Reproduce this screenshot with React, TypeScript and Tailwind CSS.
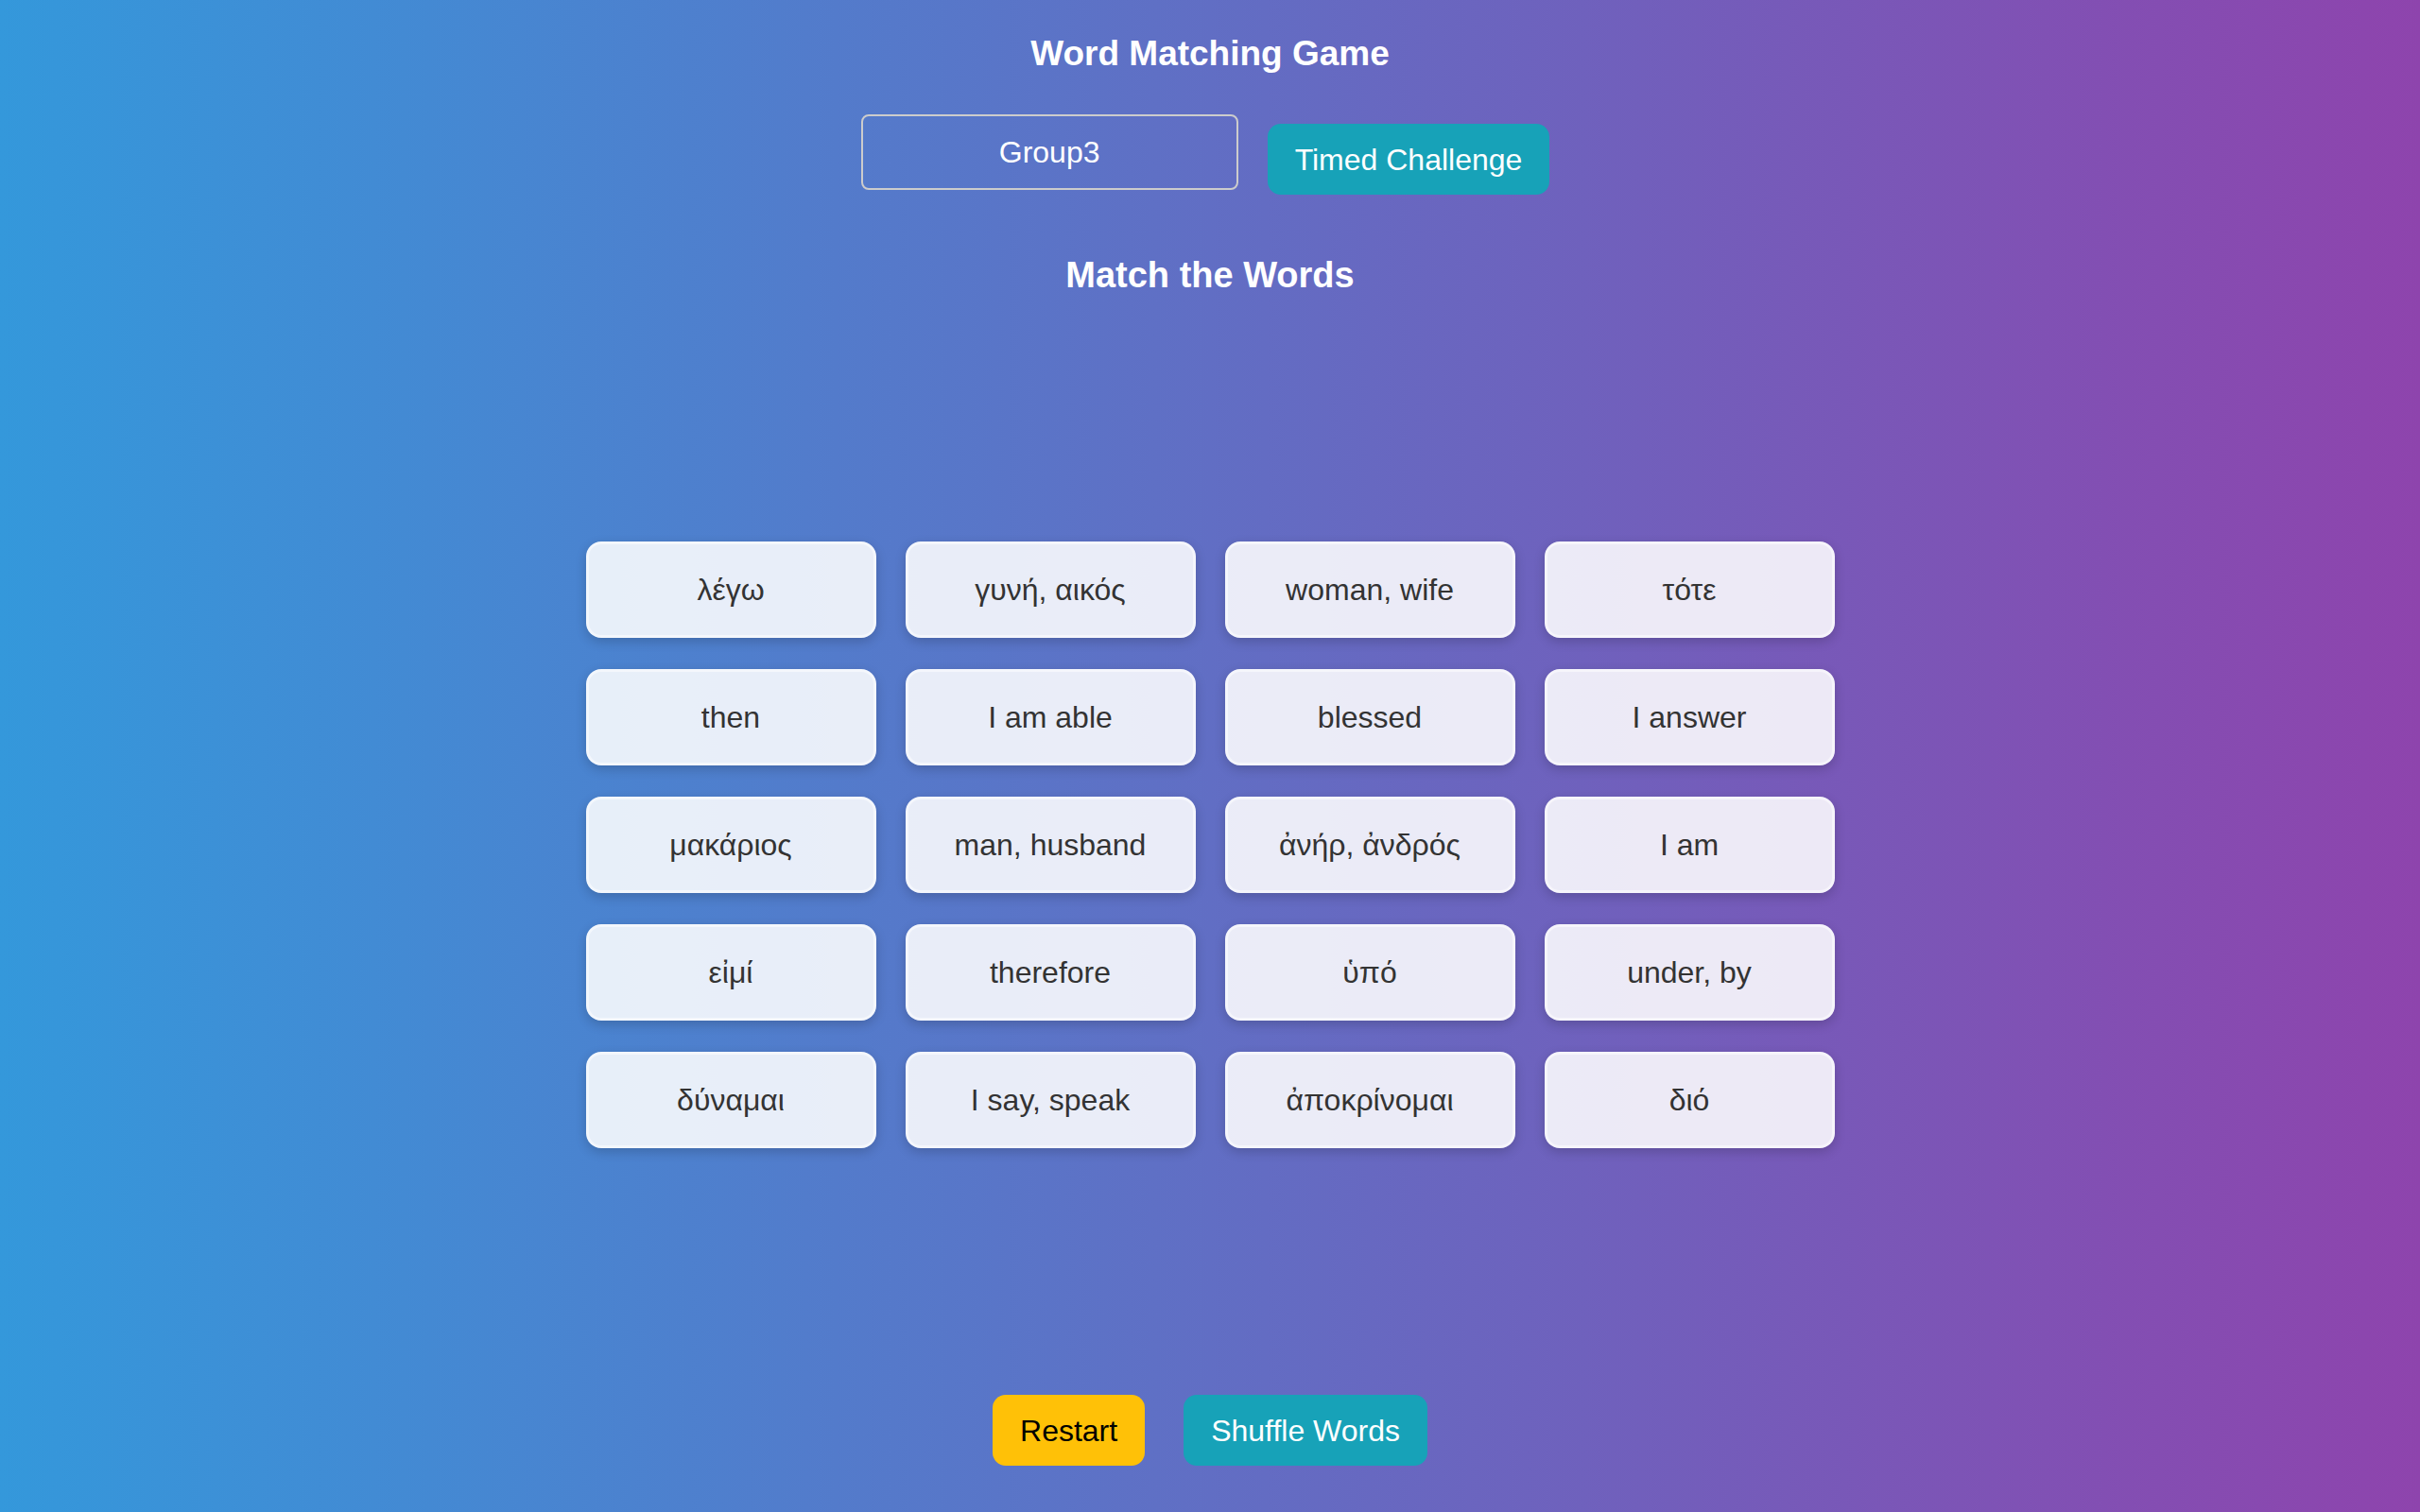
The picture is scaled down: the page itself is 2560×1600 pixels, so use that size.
const cards = [
  "λέγω",
  "γυνή, αικός",
  "woman, wife",
  "τότε",
  "then",
  "I am able",
  "blessed",
  "I answer",
  "μακάριος",
  "man, husband",
  "ἀνήρ, ἀνδρός",
  "I am",
  "εἰμί",
  "therefore",
  "ὑπό",
  "under, by",
  "δύναμαι",
  "I say, speak",
  "ἀποκρίνομαι",
  "διό",
];

export default function App() {
  return (
    <div className="min-h-screen bg-[linear-gradient(to_right,#3498db,#8e44ad)] font-['Liberation_Sans',Arial,sans-serif] flex flex-col items-center">
      {/* Header */}
      <h1 className="pt-[35px] text-[37px] leading-[44px] font-bold text-white">
        Word Matching Game
      </h1>

      <div className="mt-[42px] mr-[10px] flex items-start">
        <select
          defaultValue="Group3"
          className="appearance-none w-[399px] h-[80px] border-2 border-[#cccccc] rounded-[8px] bg-transparent text-white text-[32px] text-center [text-align-last:center] outline-none"
        >
          <option className="text-black">Group1</option>
          <option className="text-black">Group2</option>
          <option className="text-black">Group3</option>
        </select>
        <button className="mt-[10px] ml-[31px] h-[75px] px-[29px] rounded-[14px] bg-[#17a2b8] text-white text-[32px]">
          Timed Challenge
        </button>
      </div>

      <h2 className="mt-[62px] text-[38px] leading-[46px] font-bold text-white">
        Match the Words
      </h2>

      {/* Cards */}
      <div className="mt-[259px] grid grid-cols-[repeat(4,307px)] gap-x-[31px] gap-y-[33px]">
        {cards.map((word, i) => (
          <button
            key={i}
            className="h-[102px] rounded-[16px] bg-white/[0.87] border-[3px] border-white/50 shadow-[0_4px_12px_rgba(0,0,0,0.18)] text-[#333333] text-[32px] flex items-center justify-center"
          >
            {word}
          </button>
        ))}
      </div>

      <div className="mt-[261px] flex gap-[41px]">
        <button className="h-[75px] px-[29px] rounded-[14px] bg-[#ffc107] text-black text-[32px]">
          Restart
        </button>
        <button className="h-[75px] px-[29px] rounded-[14px] bg-[#17a2b8] text-white text-[32px]">
          Shuffle Words
        </button>
      </div>
    </div>
  );
}
